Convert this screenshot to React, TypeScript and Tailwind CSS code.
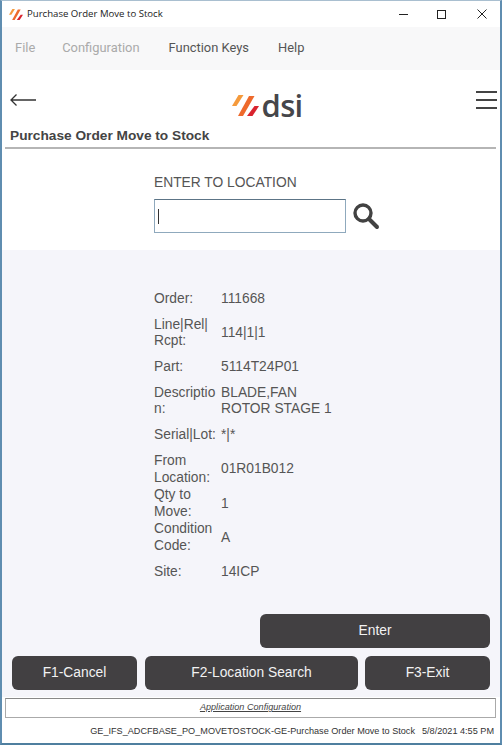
const rows: [string, string][] = [
  ["Order:", "111668"],
  ["Line|Rel|\nRcpt:", "114|1|1"],
  ["Part:", "5114T24P01"],
  ["Descriptio\nn:", "BLADE,FAN\nROTOR STAGE 1"],
  ["Serial|Lot:", "*|*"],
  ["From\nLocation:", "01R01B012"],
  ["Qty to\nMove:", "1"],
  ["Condition\nCode:", "A"],
  ["Site:", "14ICP"],
];

const DarkButton = ({ label, className }: { label: string; className: string }) => (
  <button className={`h-[34px] rounded-[6px] bg-[#424042] text-[13.8px] text-[#f2f2f2] ${className}`}>
    {label}
  </button>
);

const Slashes = ({ className }: { className: string }) => (
  <svg viewBox="0 0 27 21" className={className}>
    <path d="M6.5 0h5L4.5 11H0z" fill="#f59a3c" />
    <path d="M17 1h5.5L11 21H6z" fill="#ee6a2c" />
    <path d="M22.5 11H27l-6.5 10H15z" fill="#d9232e" />
  </svg>
);

export default function App() {
  return (
    <div className="flex h-[745px] w-[502px] flex-col overflow-hidden border-x-2 border-t border-b-2 border-x-[#5f8db0] border-t-[#a9bfd0] border-b-[#4f7f9f] bg-white font-['Liberation_Sans',sans-serif] text-[#444]">
      {/* window title bar */}
      <div className="flex h-[26px] shrink-0 items-center pl-[7px]">
        <Slashes className="h-[11px] w-[14px]" />
        <span className="ml-[4px] font-['Open_Sans',sans-serif] text-[9.6px] text-[#222]">Purchase Order Move to Stock</span>
        <div className="ml-auto flex items-center pr-[13px]">
          <div className="h-px w-[9px] bg-[#222]" />
          <div className="ml-[29px] size-[9px] border border-[#222]" />
          <svg viewBox="0 0 10 10" className="ml-[31px] size-[10px]" stroke="#222" strokeWidth="1">
            <path d="M.5.5l9 9M9.5.5l-9 9" />
          </svg>
        </div>
      </div>

      {/* menu */}
      <div className="flex h-[43px] shrink-0 items-center bg-[#f8f8f9] pb-[2px] pl-[13px] font-['Roboto',sans-serif] text-[12.9px]">
        <span className="text-[#aaa]">File</span>
        <span className="ml-[27px] text-[#aaa]">Configuration</span>
        <span className="ml-[29px] text-[#555]">Function Keys</span>
        <span className="ml-[29px] text-[#555]">Help</span>
      </div>

      {/* logo row */}
      <div className="relative flex h-[47px] shrink-0 items-start justify-center pl-[32px] pt-[20px]">
        <svg viewBox="0 0 26 12" className="absolute left-[8px] top-[24px] h-[12px] w-[26px]" fill="none" stroke="#333" strokeWidth="1.3">
          <path d="M26 6H1M6.5.5L1 6l5.5 5.5" />
        </svg>
        <Slashes className="mt-[5px] h-[21px] w-[27px]" />
        <span className="ml-[3px] font-['Open_Sans',sans-serif] text-[31px] leading-[31px] font-semibold tracking-[-0.7px] text-[#46464a]">dsi</span>
        <div className="absolute right-[3px] top-[21px] flex h-[18px] w-[21px] flex-col justify-between">
          <div className="h-[2px] bg-[#444]" />
          <div className="h-[2px] bg-[#444]" />
          <div className="h-[2px] bg-[#444]" />
        </div>
      </div>

      {/* screen title */}
      <div className="ml-[3px] mr-[4px] h-[32px] shrink-0 border-b-2 border-[#b5b5b5] pl-[5px] pt-[11px]">
        <h1 className="text-[13.7px] leading-[16px] font-bold text-[#444]">Purchase Order Move to Stock</h1>
      </div>

      {/* location input */}
      <div className="h-[101px] shrink-0 pl-[152px] pt-[26px]">
        <label className="block text-[13.8px] leading-[16px] text-[#555]">ENTER TO LOCATION</label>
        <div className="mt-[8px] flex items-center">
          <div className="flex h-[34px] w-[192px] items-center border border-[#8fa9bd] border-t-[#5c7486] pl-[3px]">
            <div className="h-[15px] w-px bg-[#333]" />
          </div>
          <svg viewBox="0 0 28 28" className="ml-[6px] size-[28px]" fill="none" stroke="#424242">
            <circle cx="11" cy="11" r="8" strokeWidth="3.4" />
            <path d="M17 17l8 8" strokeWidth="4" strokeLinecap="round" />
          </svg>
        </div>
      </div>

      {/* order details + action buttons */}
      <div className="flex min-h-0 flex-1 flex-col bg-[#f5f5fa] pt-[32px]">
        <div className="ml-[152px] w-[230px]">
          {rows.map(([label, value]) => (
            <div key={label} className="flex h-[34.125px] items-center text-[13.8px] leading-[16.5px] text-[#555]">
              <div className="w-[67px] shrink-0 whitespace-pre-line">{label}</div>
              <div className="whitespace-pre-line">{value}</div>
            </div>
          ))}
        </div>
        <div className="mt-[25px] flex justify-end pr-[10px]">
          <DarkButton label="Enter" className="w-[230px]" />
        </div>
        <div className="mt-[8px] flex pl-[10px]">
          <DarkButton label="F1-Cancel" className="w-[125px]" />
          <DarkButton label="F2-Location Search" className="ml-[8px] w-[213px]" />
          <DarkButton label="F3-Exit" className="ml-[7px] w-[125px]" />
        </div>
      </div>

      {/* app config link */}
      <div className="ml-[3px] mr-[4px] mt-[1px] flex h-[20px] shrink-0 items-center justify-center border border-[#aaa] border-t-[#888] bg-white text-[9.1px] text-[#444] italic underline">
        Application Configuration
      </div>

      {/* status line */}
      <div className="flex h-[25px] shrink-0 items-center justify-end gap-[7px] pr-[6px] pt-[3px] text-[9.15px] text-[#333]">
        <span>GE_IFS_ADCFBASE_PO_MOVETOSTOCK-GE-Purchase Order Move to Stock</span>
        <span>5/8/2021 4:55 PM</span>
      </div>
    </div>
  );
}
